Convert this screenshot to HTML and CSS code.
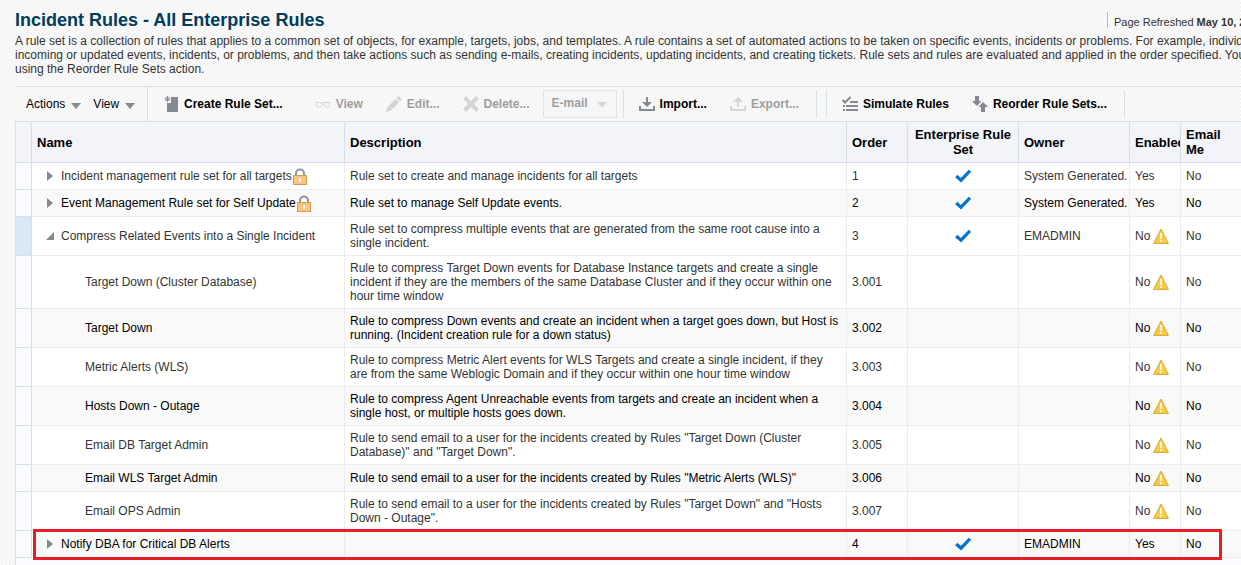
FILE: index.html
```html
<!DOCTYPE html>
<html lang="en">
<head>
<meta charset="utf-8">
<title>Incident Rules - All Enterprise Rules</title>
<link rel="stylesheet" href="styles.css">
</head>
<body>
<svg class="defs" aria-hidden="true">
  <symbol id="check" viewBox="0 0 16 14"><path d="M1.2 7 6 11.200 15 1.800" fill="none" stroke="#0572ce" stroke-width="3.200"/></symbol>
  <symbol id="warn" viewBox="0 0 16 16"><path d="M8 1 15.4 15.4H.6Z" fill="#fbc94a" stroke="#d9a62e" stroke-linejoin="round"/><path d="M7 5h2v6H7zM7 12h2v2H7z" fill="#fff8e0"/></symbol>
  <symbol id="lock" viewBox="0 0 14 17"><path d="M3 8V5.5a4 4 0 0 1 8 0V8" fill="none" stroke="#8b96a0" stroke-width="2"/><path d="M.5 7.5h13v9H.5z" fill="#fbc57f" stroke="#cf9a56"/><path d="M6 10h2v4H6z" fill="#fff"/></symbol>
  <symbol id="closed" viewBox="0 0 10 12"><path d="M2 1 8 6 2 11Z" fill="#848a8f"/></symbol>
  <symbol id="open" viewBox="0 0 10 12"><path d="M9 2V10H1Z" fill="#848a8f"/></symbol>
</svg>
<header class="page-head">
  <h1>Incident Rules - All Enterprise Rules</h1>
  <p class="refreshed">Page Refreshed <b>May 10, 2</b></p>
</header>
<p class="intro">A rule set is a collection of rules that applies to a common set of objects, for example, targets, jobs, and templates. A rule contains a set of automated actions to be taken on specific events, incidents or problems. For example, individ<br>incoming or updated events, incidents, or problems, and then take actions such as sending e-mails, creating incidents, updating incidents, and creating tickets. Rule sets and rules are evaluated and applied in the order specified. You<br>using the Reorder Rule Sets action.</p>
<main class="panel">
  <div class="toolbar" role="toolbar">
    <div class="menus">
      <button class="menu">Actions<i class="caret"></i></button>
      <button class="menu">View<i class="caret"></i></button>
    </div>
    <button class="tool create"><svg width="16" height="16" viewBox="0 0 16 16"><path d="M8 1h7v15H4V7h4z" fill="currentColor"/><path d="M4.500 0v6M1.500 3h6M2.500 1l4 4M6.500 1l-4 4" stroke="currentColor" fill="none"/></svg>Create Rule Set...</button>
    <button class="tool view" disabled><svg width="16" height="16" viewBox="0 0 16 16"><path d="M.5 6.500H6l2 1 2-1h5.500M1.500 7v2.500l1 1.500h3L7 9.500V7.500M14.500 7v2.500l-1 1.500h-3L9 9.500V7.500" fill="none" stroke="currentColor"/></svg>View</button>
    <button class="tool edit" disabled><svg width="16" height="16" viewBox="0 0 16 16"><path d="M12.500 0 16 3.500 14 5.500 10.500 2ZM9.500 3 13 6.500 5 14.500 0 16 1.500 11Z" fill="currentColor"/></svg>Edit...</button>
    <button class="tool delete" disabled><svg width="16" height="16" viewBox="0 0 16 16"><path d="m1.500 1.500 13 13m0-13-13 13" stroke="currentColor" stroke-width="4"/></svg>Delete...</button>
    <button class="email" disabled>E-mail<i class="caret"></i></button>
    <i class="sep sep-a"></i>
    <button class="tool import"><svg width="16" height="16" viewBox="0 0 16 16"><path d="M7 1h2v5h4L8 11 3 6h4zM0 10h2v3h12v-3h2v5H0z" fill="currentColor"/></svg>Import...</button>
    <button class="tool export" disabled><svg width="16" height="16" viewBox="0 0 16 16"><path d="M7 11h2V6h4L8 1 3 6h4zM0 10h2v3h12v-3h2v5H0z" fill="currentColor"/></svg>Export...</button>
    <i class="sep sep-b"></i><i class="sep sep-c"></i>
    <button class="tool simulate"><svg width="16" height="16" viewBox="0 0 16 16"><path d="M.5 4 3 6.500 8.500 1" fill="none" stroke="currentColor" stroke-width="2"/><path d="M8 5h8v2H8zM4 9h12v2H4zM4 13h12v2H4zM1 9h2v2H1zM1 13h2v2H1z" fill="currentColor"/></svg>Simulate Rules</button>
    <button class="tool reorder"><svg width="16" height="16" viewBox="0 0 16 16"><path d="M3 0h4v5h2.500L5 10 0 5h3zM9 16h4v-5h3l-5-5-4.500 5H9z" fill="currentColor"/></svg>Reorder Rule Sets...</button>
    <i class="sep sep-d"></i>
  </div>
  <table class="rules">
    <colgroup><col class="c-gutter"><col class="c-name"><col><col class="c-order"><col class="c-ent"><col class="c-owner"><col class="c-enabled"><col class="c-me"></colgroup>
    <thead><tr><th></th><th>Name</th><th>Description</th><th>Order</th><th class="center">Enterprise Rule Set</th><th>Owner</th><th>Enabled</th><th>Email Me</th></tr></thead>
    <tbody>
      <tr><td></td><td><div class="node"><svg class="tw"><use href="#closed"/></svg>Incident management rule set for all targets<svg class="lock"><use href="#lock"/></svg></div></td><td>Rule set to create and manage incidents for all targets</td><td>1</td><td class="center"><svg class="check"><use href="#check"/></svg></td><td class="nowrap">System Generated.</td><td>Yes</td><td>No</td></tr>
      <tr class="alt"><td></td><td><div class="node"><svg class="tw"><use href="#closed"/></svg>Event Management Rule set for Self Update<svg class="lock"><use href="#lock"/></svg></div></td><td>Rule set to manage Self Update events.</td><td>2</td><td class="center"><svg class="check"><use href="#check"/></svg></td><td class="nowrap">System Generated.</td><td>Yes</td><td>No</td></tr>
      <tr class="selected"><td></td><td><div class="node"><svg class="tw"><use href="#open"/></svg>Compress Related Events into a Single Incident</div></td><td>Rule set to compress multiple events that are generated from the same root cause into a single incident.</td><td>3</td><td class="center"><svg class="check"><use href="#check"/></svg></td><td>EMADMIN</td><td><div class="state">No<svg class="warn"><use href="#warn"/></svg></div></td><td>No</td></tr>
      <tr><td></td><td class="child">Target Down (Cluster Database)</td><td>Rule to compress Target Down events for Database Instance targets and create a single incident if they are the members of the same Database Cluster and if they occur within one hour time window</td><td>3.001</td><td></td><td></td><td><div class="state">No<svg class="warn"><use href="#warn"/></svg></div></td><td>No</td></tr>
      <tr class="alt"><td></td><td class="child">Target Down</td><td>Rule to compress Down events and create an incident when a target goes down, but Host is running. (Incident creation rule for a down status)</td><td>3.002</td><td></td><td></td><td><div class="state">No<svg class="warn"><use href="#warn"/></svg></div></td><td>No</td></tr>
      <tr><td></td><td class="child">Metric Alerts (WLS)</td><td>Rule to compress Metric Alert events for WLS Targets and create a single incident, if they are from the same Weblogic Domain and if they occur within one hour time window</td><td>3.003</td><td></td><td></td><td><div class="state">No<svg class="warn"><use href="#warn"/></svg></div></td><td>No</td></tr>
      <tr class="alt"><td></td><td class="child">Hosts Down - Outage</td><td>Rule to compress Agent Unreachable events from targets and create an incident when a single host, or multiple hosts goes down.</td><td>3.004</td><td></td><td></td><td><div class="state">No<svg class="warn"><use href="#warn"/></svg></div></td><td>No</td></tr>
      <tr><td></td><td class="child">Email DB Target Admin</td><td>Rule to send email to a user for the incidents created by Rules "Target Down (Cluster Database)" and "Target Down".</td><td>3.005</td><td></td><td></td><td><div class="state">No<svg class="warn"><use href="#warn"/></svg></div></td><td>No</td></tr>
      <tr class="alt"><td></td><td class="child">Email WLS Target Admin</td><td>Rule to send email to a user for the incidents created by Rules "Metric Alerts (WLS)"</td><td>3.006</td><td></td><td></td><td><div class="state">No<svg class="warn"><use href="#warn"/></svg></div></td><td>No</td></tr>
      <tr><td></td><td class="child">Email OPS Admin</td><td>Rule to send email to a user for the incidents created by Rules "Target Down" and "Hosts Down - Outage".</td><td>3.007</td><td></td><td></td><td><div class="state">No<svg class="warn"><use href="#warn"/></svg></div></td><td>No</td></tr>
      <tr class="alt marked"><td></td><td><div class="node"><svg class="tw"><use href="#closed"/></svg>Notify DBA for Critical DB Alerts</div></td><td></td><td>4</td><td class="center"><svg class="check"><use href="#check"/></svg></td><td>EMADMIN</td><td>Yes</td><td>No</td></tr>
    </tbody>
  </table>
</main>
</body>
</html>
```
FILE: styles.css
```css
* { box-sizing: border-box; }
html, body { height: 100%; }
body {
  margin: 0;
  padding: 8px 0 0 15px;
  display: flex;
  flex-direction: column;
  overflow: hidden;
  font: 12px/14px "Liberation Sans", Arial, sans-serif;
  color: #333;
  background: #fafafa linear-gradient(45deg, #f3f3f3 25%, #fbfbfb 25% 50%, #f3f3f3 50% 75%, #fbfbfb 75%) 0 0 / 4px 4px;
}
.defs { position: absolute; width: 0; height: 0; }
.page-head { display: flex; flex-shrink: 0; justify-content: space-between; height: 26px; }
h1 { margin: 0; font-size: 18px; line-height: 24px; color: #003d5b; }
.refreshed {
  margin: 4px 0 0;
  width: 134px;
  height: 16px;
  padding-left: 6px;
  border-left: 1px solid #b3bccb;
  font-size: 11px;
  line-height: 20px;
  white-space: nowrap;
}
.intro { margin: 0; white-space: nowrap; }
.panel { flex: 1; margin-top: 10px; display: flex; flex-direction: column; }
.toolbar {
  display: flex;
  align-items: center;
  height: 35px;
  border-top: 1px solid #d6dfe6;
  white-space: nowrap;
}
button {
  border: 0;
  padding: 0;
  background: none;
  font: inherit;
  color: #000;
  display: flex;
  align-items: center;
}
.menus {
  display: flex;
  gap: 12px;
  align-self: stretch;
  width: 133px;
  padding-left: 11px;
  border-right: 1px solid #d6dfe6;
}
.caret { margin-top: 3px; border: 5px solid transparent; border-top: 6px solid #848a8f; border-bottom: 0; }
.menu { gap: 6px; }
.tool { gap: 5px; font-weight: bold; }
.tool svg { color: #848a8f; }
.tool:disabled, .email:disabled { color: #9e9e9e; font-weight: bold; }
.tool:disabled svg { color: #d3d5d7; }
.create { margin-left: 15px; }
.view { margin-left: 32px; }
.edit, .delete, .export, .reorder { margin-left: 23px; }
.email {
  gap: 9px;
  height: 28px;
  margin-left: 13px;
  padding: 0 9px 2px 8px;
  background: #f4f6f8;
  border: 1px solid #dfe4e9;
}
.email .caret { border-top-color: #d3d5d7; }
.sep { width: 1px; height: 28px; background: #d6dfe6; }
.sep-a { margin-left: 6px; }
.import, .simulate { margin-left: 15px; }
.sep-b, .sep-d { margin-left: 17px; }
.sep-c { margin-left: 9px; }
.rules { width: 100%; table-layout: fixed; border-spacing: 0; }
.panel::after { content: ""; flex: 1; background: #f9fbff; border-left: 1px solid #d6dfe6; }
.c-gutter { width: 16px; }
.c-name { width: 313px; }
.c-order { width: 61px; }
.c-ent, .c-owner { width: 111px; }
.c-enabled { width: 51px; }
.c-me { width: 61px; }
th {
  height: 42px;
  padding: 0 5px;
  overflow: hidden;
  text-align: left;
  font-size: 13px;
  line-height: 15px;
  color: #000;
  background: #f2f4f9;
  border: solid #d6dfe6;
  border-width: 1px 0 1px 1px;
}
td {
  height: 27px;
  padding: 5px;
  overflow: hidden;
  background: #fff;
  border: solid #ececec;
  border-width: 0 0 1px 1px;
}
.alt td { color: #000; background: #f9f9f9; }
.rules td:first-child { background: #f9fbff; border-color: #d6dfe6; }
.rules td:nth-child(2) { border-left-color: #d6dfe6; padding: 0 5px 0 13px; }
.rules .selected td:first-child { background: #d9e8f6; }
.rules td.child { padding-left: 53px; }
.rules .center { text-align: center; }
.nowrap { white-space: nowrap; padding-right: 0; }
td svg { display: block; }
.node, .state { display: flex; align-items: center; }
.node .tw { width: 10px; height: 12px; margin-right: 6px; }
.lock { width: 14px; height: 17px; margin-left: 1px; }
.check { width: 16px; height: 14px; margin: 0 auto; }
.warn { width: 16px; height: 16px; margin-left: 3px; }
.state { height: 16px; margin: -1px 0; }
.marked { position: relative; }
.marked td:first-child::after {
  content: "";
  position: absolute;
  inset: -2px 19px -2px 18px;
  border: 3px solid #ed1c24;
}
```
